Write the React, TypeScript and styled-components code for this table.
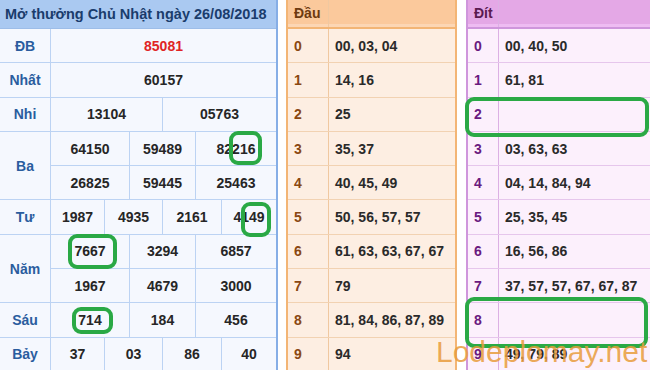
import React from "react"
import styled, { createGlobalStyle } from "styled-components"

const prizes = [
  { label: "ĐB", rows: [["85081"]], special: true },
  { label: "Nhất", rows: [["60157"]] },
  { label: "Nhi", rows: [["13104", "05763"]] },
  { label: "Ba", rows: [["64150", "59489", "82216"], ["26825", "59445", "25463"]] },
  { label: "Tư", rows: [["1987", "4935", "2161", "4149"]] },
  { label: "Năm", rows: [["7667", "3294", "6857"], ["1967", "4679", "3000"]] },
  { label: "Sáu", rows: [["714", "184", "456"]] },
  { label: "Bảy", rows: [["37", "03", "86", "40"]] },
]

const colTemplates: Record<number, string> = {
  1: "1fr",
  2: "112px 1fr",
  3: "79px 66px 1fr",
  4: "54px 58px 59px 1fr",
}

const dau = [
  "00, 03, 04",
  "14, 16",
  "25",
  "35, 37",
  "40, 45, 49",
  "50, 56, 57, 57",
  "61, 63, 63, 67, 67",
  "79",
  "81, 84, 86, 87, 89",
  "94",
]

const dit = [
  "00, 40, 50",
  "61, 81",
  "",
  "03, 63, 63",
  "04, 14, 84, 94",
  "25, 35, 45",
  "16, 56, 86",
  "37, 57, 57, 67, 67, 87",
  "",
  "49, 79, 89",
]

// green hand-drawn highlights laid over the tables
const marks = [
  { x: 229, y: 131, w: 33, h: 34 },
  { x: 241, y: 202, w: 30, h: 35 },
  { x: 68, y: 234, w: 49, h: 35 },
  { x: 72, y: 307, w: 41, h: 27 },
  { x: 465, y: 97, w: 184, h: 40 },
  { x: 465, y: 297, w: 183, h: 51 },
]

const ROW = 34.3

function App() {
  return (
    <>
      <GlobalStyle />
      <Page>
        <Results>
          <ResultsHead>Mở thưởng Chủ Nhật ngày 26/08/2018</ResultsHead>
          {prizes.map((p) => (
            <PrizeRow key={p.label}>
              <PrizeLabel>{p.label}</PrizeLabel>
              <div>
                {p.rows.map((r, i) => (
                  <NumberRow key={i} cols={colTemplates[r.length]}>
                    {r.map((n, j) => (
                      <NumberCell key={j} red={p.special}>
                        {n}
                      </NumberCell>
                    ))}
                  </NumberRow>
                ))}
              </div>
            </PrizeRow>
          ))}
        </Results>

        <LotoTable tone="orange">
          <LotoHead tone="orange">
            <HeadCell tone="orange">Đầu</HeadCell>
            <div />
          </LotoHead>
          {dau.map((v, i) => (
            <LotoRow key={i} tone="orange">
              <DigitCell tone="orange">{i}</DigitCell>
              <ValueCell>{v}</ValueCell>
            </LotoRow>
          ))}
        </LotoTable>

        <LotoTable tone="purple">
          <LotoHead tone="purple">
            <HeadCell tone="purple">Đít</HeadCell>
            <div />
          </LotoHead>
          {dit.map((v, i) => (
            <LotoRow key={i} tone="purple">
              <DigitCell tone="purple">{i}</DigitCell>
              <ValueCell>{v}</ValueCell>
            </LotoRow>
          ))}
        </LotoTable>

        {marks.map((m, i) => (
          <Mark key={i} style={{ left: m.x, top: m.y, width: m.w, height: m.h }} />
        ))}
        <Watermark>Lodeplomay.net</Watermark>
      </Page>
    </>
  )
}

type Tone = "orange" | "purple"

const palette = {
  orange: {
    head: "#fbc99c",
    body: "#fdeee2",
    line: "#f2d2b2",
    edge: "#f3b575",
    digit: "#8a4812",
    headText: "#6e3a10",
    split: "#f0c8a0",
  },
  purple: {
    head: "#e4a8e6",
    body: "#fcf0fc",
    line: "#e6c6ec",
    edge: "#cf96dc",
    digit: "#6a1a80",
    headText: "#5a1a50",
    split: "#dcb0e4",
  },
}

const GlobalStyle = createGlobalStyle`
  * {
    box-sizing: border-box;
  }
  body {
    margin: 0;
    background: #fff;
    overflow: hidden;
    font-family: "Liberation Sans", Arial, sans-serif;
  }
`

const Page = styled.div`
  position: relative;
  width: 650px;
  height: 370px;
  display: flex;
  align-items: flex-start;
  overflow: hidden;
`

const Results = styled.div`
  width: 278px;
  flex: none;
  background: #f5f8fe;
  border-right: 2px solid #86aee6;
`

const ResultsHead = styled.div`
  height: 29px;
  background: #aac9f1;
  color: #1a3c6c;
  font-weight: bold;
  font-size: 14.5px;
  line-height: 29px;
  padding-left: 5px;
  white-space: nowrap;
  border-bottom: 1px solid #9dbde8;
`

const PrizeRow = styled.div`
  display: grid;
  grid-template-columns: 51px 1fr;
`

const PrizeLabel = styled.div`
  display: flex;
  align-items: center;
  justify-content: center;
  color: #2a5d9e;
  font-weight: bold;
  font-size: 14px;
  border-right: 1px solid #bcd3f3;
  border-bottom: 1px solid #bcd3f3;
`

const NumberRow = styled.div<{ cols: string }>`
  display: grid;
  grid-template-columns: ${(p) => p.cols};
  height: ${ROW}px;
`

const NumberCell = styled.div<{ red?: boolean }>`
  display: flex;
  align-items: center;
  justify-content: center;
  font-weight: bold;
  font-size: 14px;
  color: ${(p) => (p.red ? "#e02424" : "#262626")};
  border-bottom: 1px solid #bcd3f3;
  &:not(:last-child) {
    border-right: 1px solid #bcd3f3;
  }
`

const LotoTable = styled.div<{ tone: Tone }>`
  flex: none;
  width: ${(p) => (p.tone === "orange" ? "171px" : "190px")};
  margin-left: ${(p) => (p.tone === "orange" ? "8px" : "9px")};
  background: ${(p) => palette[p.tone].body};
  border-left: 2px solid ${(p) => palette[p.tone].edge};
  border-right: ${(p) => (p.tone === "orange" ? `2px solid ${palette.orange.edge}` : "none")};
`

const LotoHead = styled.div<{ tone: Tone }>`
  display: grid;
  grid-template-columns: ${(p) => (p.tone === "orange" ? "41px" : "31px")} 1fr;
  height: 29px;
  background: ${(p) => palette[p.tone].head};
  border-bottom: 2px solid ${(p) => palette[p.tone].edge};
  box-shadow: inset 0 -3px 0 ${(p) => (p.tone === "purple" ? "#eebcf2" : "#fcd6b4")};
  & > div:first-child {
    border-right: 1px solid ${(p) => palette[p.tone].split};
  }
`

const HeadCell = styled.div<{ tone: Tone }>`
  color: ${(p) => palette[p.tone].headText};
  font-weight: bold;
  font-size: 14px;
  line-height: 27px;
  padding-left: 6px;
`

const LotoRow = styled.div<{ tone: Tone }>`
  display: grid;
  grid-template-columns: ${(p) => (p.tone === "orange" ? "41px" : "31px")} 1fr;
  height: ${ROW}px;
  border-bottom: 1px solid ${(p) => palette[p.tone].line};
  & > div:first-child {
    border-right: 1px solid ${(p) => palette[p.tone].split};
  }
`

const DigitCell = styled.div<{ tone: Tone }>`
  display: flex;
  align-items: center;
  padding-left: 6px;
  font-weight: bold;
  font-size: 14px;
  color: ${(p) => palette[p.tone].digit};
`

const ValueCell = styled.div`
  display: flex;
  align-items: center;
  padding-left: 6px;
  font-weight: bold;
  font-size: 14px;
  color: #2a2a2a;
  white-space: nowrap;
`

const Mark = styled.div`
  position: absolute;
  border: 4px solid #2aa945;
  border-radius: 9px;
  pointer-events: none;
`

const Watermark = styled.div`
  position: absolute;
  left: 436px;
  top: 336px;
  font-family: "Liberation Sans", Arial, sans-serif;
  font-size: 30px;
  line-height: 32px;
  color: rgba(232, 156, 60, 0.85);
  white-space: nowrap;
  pointer-events: none;
`

export default App
